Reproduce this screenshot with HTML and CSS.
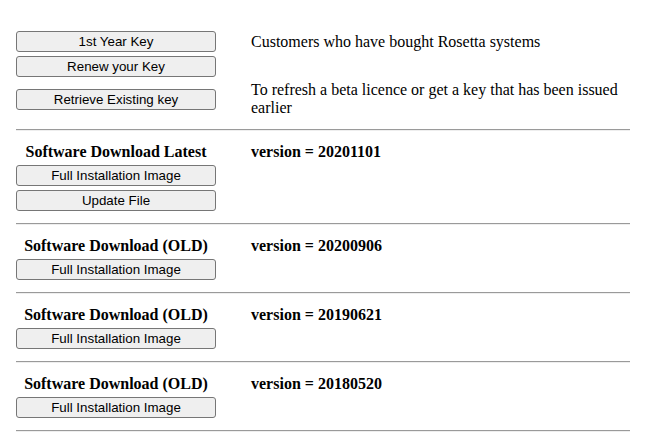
FILE: index.html
```html
<html lang="en">
<head>
  <link rel="stylesheet" href="styles.css">
</head>
<body>
  <div class="pagina">

    <div class="bloque">
      <div class="fila">
        <button class="boton">1st Year Key</button>
        <p class="texto">Customers who have bought Rosetta systems</p>
      </div>
      <div class="fila">
        <button class="boton">Renew your Key</button>
      </div>
      <div class="fila">
        <button class="boton">Retrieve Existing key</button>
        <p class="texto">To refresh a beta licence or get a key that has been issued earlier</p>
      </div>
    </div>
    <hr class="linea">

    <div class="bloque">
      <div class="fila">
        <h3 class="titulo">Software Download Latest</h3>
        <p class="texto version">version = 20201101</p>
      </div>
      <button class="boton">Full Installation Image</button>
      <button class="boton">Update File</button>
    </div>
    <hr class="linea">

    <div class="bloque">
      <div class="fila">
        <h3 class="titulo">Software Download (OLD)</h3>
        <p class="texto version">version = 20200906</p>
      </div>
      <button class="boton">Full Installation Image</button>
    </div>
    <hr class="linea">

    <div class="bloque">
      <div class="fila">
        <h3 class="titulo">Software Download (OLD)</h3>
        <p class="texto version">version = 20190621</p>
      </div>
      <button class="boton">Full Installation Image</button>
    </div>
    <hr class="linea">

    <div class="bloque">
      <div class="fila">
        <h3 class="titulo">Software Download (OLD)</h3>
        <p class="texto version">version = 20180520</p>
      </div>
      <button class="boton">Full Installation Image</button>
    </div>
    <hr class="linea">

  </div>
</body>
</html>
```

FILE: styles.css
```css
body {
    margin: 8px;
    font-family: "Liberation Serif", "Times New Roman", serif;
    font-size: 16px;
    color: black;
    background: white;
}

.pagina {
    width: 614px;
    padding: 23px 8px 0 8px;
}

.bloque {
    display: flex;
    flex-direction: column;
    gap: 4px;
}

.fila {
    display: flex;
    align-items: center;
    gap: 35px;
}

.boton {
    width: 200px;
    height: 21px;
    flex: none;
    padding: 0 6px;
    font-family: "Liberation Sans", Arial, sans-serif;
    font-size: 13.33px;
    color: black;
    background-color: #efefef;
    border: 1px solid #767676;
    border-radius: 3px;
}

.texto {
    margin: 0;
    line-height: 18px;
}

.titulo {
    width: 200px;
    flex: none;
    margin: 0;
    font-size: 16px;
    line-height: 18px;
    text-align: center;
}

.version {
    font-weight: bold;
}

.linea {
    margin: 12px 0;
    height: 0;
    border: none;
    border-top: 1px solid #9a9a9a;
    border-bottom: 1px solid #eeeeee;
}
```
